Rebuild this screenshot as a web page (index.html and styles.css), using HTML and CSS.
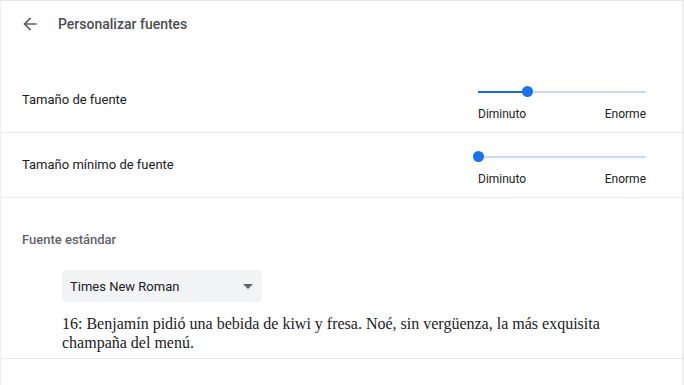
FILE: index.html
```html
<!DOCTYPE html>
<html lang="es">
<head>
    <meta charset="UTF-8">
    <meta name="viewport" content="width=device-width, initial-scale=1.0">
    <title>Personalizar fuentes</title>
    <link rel="stylesheet" href="styles.css">
</head>
<body>
    <div class="card">
        <div class="header">
            <svg class="back" width="20" height="20" viewBox="0 0 24 24">
                <path d="M20 11H7.83l5.59-5.59L12 4l-8 8 8 8 1.41-1.41L7.83 13H20v-2z" fill="#5f6368"/>
            </svg>
            <span class="title">Personalizar fuentes</span>
        </div>

        <div class="row">
            <span class="label">Tamaño de fuente</span>
            <div class="slider">
                <div class="track">
                    <div class="fill" style="width: 49px"></div>
                    <div class="knob" style="left: 49px"></div>
                </div>
                <div class="ticks">
                    <span>Diminuto</span>
                    <span>Enorme</span>
                </div>
            </div>
        </div>

        <div class="row">
            <span class="label">Tamaño mínimo de fuente</span>
            <div class="slider">
                <div class="track">
                    <div class="fill" style="width: 0px"></div>
                    <div class="knob" style="left: 0px"></div>
                </div>
                <div class="ticks">
                    <span>Diminuto</span>
                    <span>Enorme</span>
                </div>
            </div>
        </div>

        <div class="section">
            <div class="section-title">Fuente estándar</div>
            <div class="select">
                <span>Times New Roman</span>
                <span class="caret"></span>
            </div>
            <p class="sample">16: Benjamín pidió una bebida de kiwi y fresa. Noé, sin vergüenza, la más exquisita champaña del menú.</p>
        </div>
    </div>
</body>
</html>
```

FILE: styles.css
```css
html, body {
    margin: 0;
    background-color: #eeeeee;
}

body {
    font-family: Roboto, "Liberation Sans", Arial, sans-serif;
    color: #202124;
    height: 385px;
    overflow: hidden;
}

.card {
    margin: 0 2px 0 1px;
    background-color: #fff;
    border-top: 1px solid #e6e6e6;
    min-height: 384px;
}

.header {
    display: flex;
    align-items: center;
    height: 45px;
    padding-left: 19px;
    margin-bottom: 22px;
}

.back {
    display: block;
    margin-right: 18px;
}

.title {
    font-size: 14px;
    font-weight: 500;
    color: #4a4d51;
}

.row {
    display: flex;
    justify-content: space-between;
    align-items: center;
    height: 64px;
    padding: 0 36px 0 21px;
    border-bottom: 1px solid #e8eaed;
}

.label {
    font-size: 13px;
    margin-top: -2px;
}

.slider {
    align-self: flex-start;
    width: 168px;
    padding-top: 14px;
}

.track {
    position: relative;
    height: 20px;
}

.track::before {
    content: "";
    position: absolute;
    left: 0;
    right: 0;
    top: 9px;
    height: 2px;
    background-color: #c8d9f3;
}

.fill {
    position: absolute;
    left: 0;
    top: 9px;
    height: 2px;
    background-color: #1967d2;
}

.knob {
    position: absolute;
    top: 4px;
    width: 11px;
    height: 11px;
    margin-left: -5px;
    border-radius: 50%;
    background-color: #1a73e8;
}

.ticks {
    display: flex;
    justify-content: space-between;
    margin-top: 4px;
    font-size: 12px;
    line-height: 16px;
    color: #202124;
}

.section {
    padding: 32px 21px 6px 21px;
    border-bottom: 1px solid #e8eaed;
}

.section-title {
    font-size: 13px;
    font-weight: 500;
    line-height: 20px;
    color: #5f6368;
}

.select {
    display: flex;
    align-items: center;
    justify-content: space-between;
    width: 200px;
    height: 32px;
    box-sizing: border-box;
    margin: 20px 0 0 40px;
    padding: 0 9px 0 8px;
    background-color: #f1f3f4;
    border-radius: 4px;
    font-size: 13px;
    color: #202124;
}

.caret {
    width: 0;
    height: 0;
    border-left: 5px solid transparent;
    border-right: 5px solid transparent;
    border-top: 5px solid #5f6368;
}

.sample {
    max-width: 560px;
    margin: 12px 0 0 40px;
    font-family: "Liberation Serif", "Times New Roman", serif;
    font-size: 16px;
    line-height: 19px;
    color: #202124;
}
```
